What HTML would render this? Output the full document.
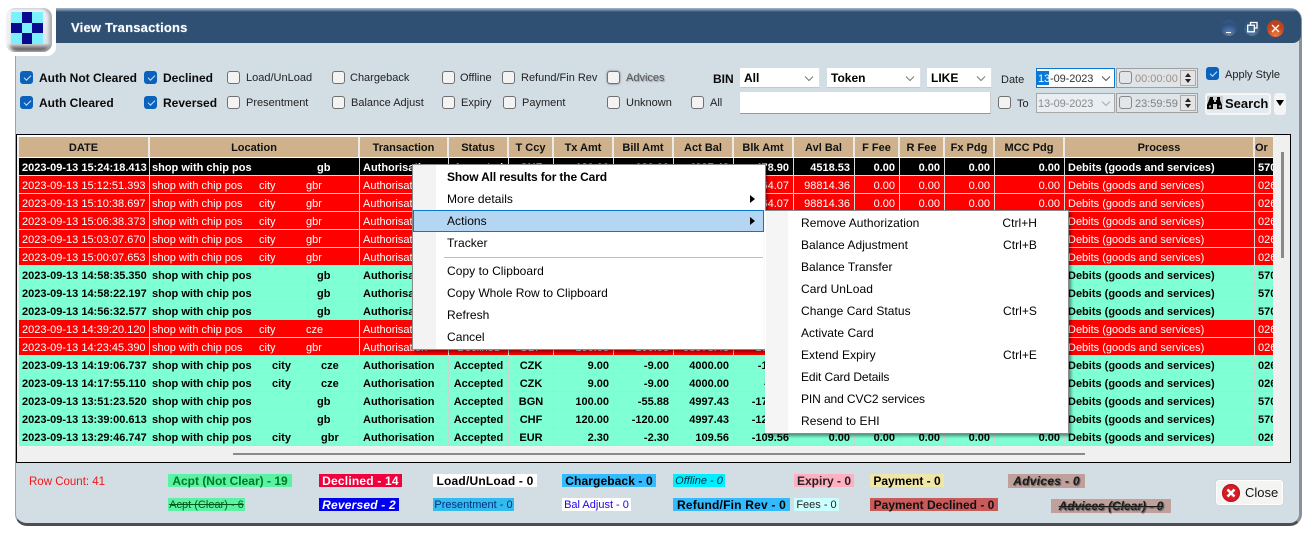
<!DOCTYPE html>
<html><head><meta charset="utf-8"><title>View Transactions</title>
<style>
html,body{margin:0;padding:0;background:#fff;width:1305px;height:536px;overflow:hidden}
body{position:relative;font:11px "Liberation Sans",sans-serif;color:#222}
div,span,td{box-sizing:border-box}
.a{position:absolute}
.t{position:absolute;white-space:nowrap;line-height:14px}
.b{font-weight:bold;font-size:12px;color:#0a0a0a}
.cb{position:absolute;width:13px;height:13px;border-radius:3px;border:1px solid #707070;background:#f3f3f3}
.cb.on{background:#0a62bc;border-color:#0a62bc}
.cb.on::after{content:"";position:absolute;left:3px;top:2.5px;width:6px;height:3px;border-left:1px solid #cfe2f7;border-bottom:1px solid #cfe2f7;transform:rotate(-45deg)}
.sel{position:absolute;background:#fff;border-bottom:1px solid #c4c8cc;border-right:1px solid #dde;font:bold 12px/21px "Liberation Sans",sans-serif;color:#000;padding-left:4px}
.chev{position:absolute;right:4px;top:7px;width:12px;height:7px}
.tm{position:absolute;left:1116px;width:82px;background:#dfe4e8;border:1px solid #a0a0a0}
.spin{position:absolute;left:63px;top:1px;width:16px;bottom:1px;background:#e4e4e4;border:1px solid #aaa}
.spin::before{content:"";position:absolute;left:4px;top:2px;border:3.5px solid transparent;border-top:0;border-bottom:4px solid #222}
.spin::after{content:"";position:absolute;left:4px;bottom:2px;border:3.5px solid transparent;border-bottom:0;border-top:4px solid #222}
.tbl{position:absolute;left:19px;width:1254px;border-collapse:separate;border-spacing:0;table-layout:fixed}
.tbl td{height:18px;padding:3px 3px 0;white-space:nowrap;overflow:hidden;font-size:11px;line-height:14px;border-right:1px solid #d8d8d8;border-bottom:1px solid #d8d8d8;position:relative}
.tbl td:nth-child(4),.tbl td:nth-child(5){text-align:center;padding:3px 0 0}
.tbl td:nth-child(n+6):nth-child(-n+14){text-align:right;padding-right:4px}
.tbl td:nth-child(2){padding-left:2px}
.tbl td:nth-child(16){padding-right:0;border-right:0}
.k td{background:#000;color:#fff;font-weight:bold}
.r td{background:#f00;color:#fff}
.g td{background:#7fffd4;color:#000;font-weight:bold;border-color:#c9d6d0}
.h td{background:#cfb28c;color:#111;font-weight:bold;text-align:center!important;height:20px;padding:2px 0 0!important;border-right:2px solid #e9e9e9;border-bottom:0;line-height:18px}
.p{position:absolute;top:3px}
.menu{position:absolute;background:#fff;border:1px solid #8a8a8a;box-shadow:2px 2px 3px rgba(0,0,0,.45)}
.m{position:absolute;white-space:nowrap;font-size:12px;line-height:16px;color:#000;letter-spacing:.05px}
.lb{position:absolute;height:13px;line-height:14px;text-align:center;white-space:nowrap;font-size:11px}
.lb.bd{font-weight:bold;font-size:12px;color:#000}
.arr{position:absolute;border:4px solid transparent;border-right:0;border-left:5px solid #000}
</style></head><body>

<!-- window -->
<div class="a" style="left:15px;top:8px;width:1287px;height:518px;background:#d3dde4;border-radius:12px;border-left:1px solid #8ea3bd;border-right:3px solid #8b9196;border-bottom:3px solid #4c4f52"></div>
<div class="a" style="left:15px;top:8px;width:1286px;height:35px;background:linear-gradient(#aab9cf 0,#6f88a8 2px,#2f5073 4px,#2f5073 100%);border-radius:12px 12px 8px 0"></div>
<div class="a" style="left:0;top:0;width:56px;height:56px;background:#fff;border-bottom-right-radius:9px"></div>
<div class="a" style="left:0;top:0;width:100%;height:8px;background:#fff"></div>

<!-- logo -->
<div class="a" style="left:6px;top:8px;width:46px;height:44px;border-radius:9px;background:linear-gradient(#eef1f4 0,#dfe4e8 80%,#6e6e6e 92%,#555 100%);box-shadow:inset -3px 0 3px #a8acb0,inset 3px 0 3px #f4f4f4"></div>
<div class="a" style="left:11px;top:12px;width:32px;height:32px;background:#7cf0ff"></div>
<div class="a" style="left:22px;top:12px;width:10px;height:11px;background:#0a0a90"></div>
<div class="a" style="left:11px;top:23px;width:11px;height:10px;background:#0a0a90"></div>
<div class="a" style="left:32px;top:23px;width:11px;height:10px;background:#0a0a90"></div>
<div class="a" style="left:22px;top:33px;width:10px;height:11px;background:#0a0a90"></div>

<div class="t" style="left:71px;top:21px;color:#fff;font-weight:bold;font-size:13px;letter-spacing:.2px;text-shadow:0 0 1px #9fb4cc">View Transactions</div>

<!-- window buttons -->
<div class="a" style="left:1221px;top:20px;width:16px;height:16px;border-radius:50%;background:radial-gradient(circle at 50% 85%,#5f86b5,#2d5080 60%,#3f5f88)"></div>
<div class="a" style="left:1226px;top:32px;width:5px;height:1px;background:#fff"></div>
<div class="a" style="left:1244px;top:20px;width:16px;height:16px;border-radius:50%;background:radial-gradient(circle at 50% 85%,#54799f,#33557c 70%)"></div>
<svg class="a" style="left:1246px;top:21px" width="13" height="13" viewBox="0 0 13 13"><path d="M4.5 3.5V1.5H11V7H8.5" fill="none" stroke="#fff" stroke-width="1.3"/><rect x="1.7" y="4.2" width="6.6" height="6.6" fill="none" stroke="#fff" stroke-width="1.3"/></svg>
<div class="a" style="left:1267px;top:20px;width:17px;height:17px;border-radius:50%;background:radial-gradient(circle at 50% 90%,#f07a3c,#c0441c 55%,#a8482c)"></div>
<svg class="a" style="left:1270px;top:23px" width="11" height="11" viewBox="0 0 11 11"><path d="M2 2L9 9M9 2L2 9" stroke="#fff" stroke-width="1.3"/></svg>

<!-- filters -->
<div class="cb on" style="left:20px;top:71px"></div><div class="t b" style="left:39px;top:71px">Auth Not Cleared</div>
<div class="cb on" style="left:144px;top:71px"></div><div class="t b" style="left:163px;top:71px">Declined</div>
<div class="cb" style="left:227px;top:71px"></div><div class="t" style="left:246px;top:71px">Load/UnLoad</div>
<div class="cb" style="left:332px;top:71px"></div><div class="t" style="left:350px;top:71px">Chargeback</div>
<div class="cb" style="left:442px;top:71px"></div><div class="t" style="left:460px;top:71px">Offline</div>
<div class="cb" style="left:502px;top:71px"></div><div class="t" style="left:521px;top:71px">Refund/Fin Rev</div>
<div class="cb" style="left:607px;top:71px;box-shadow:0 0 2px #777"></div><div class="t" style="left:626px;top:71px;color:#555;text-shadow:1px 1px 1px #999">Advices</div>

<div class="cb on" style="left:20px;top:96px"></div><div class="t b" style="left:39px;top:96px">Auth Cleared</div>
<div class="cb on" style="left:144px;top:96px"></div><div class="t b" style="left:163px;top:96px">Reversed</div>
<div class="cb" style="left:227px;top:96px"></div><div class="t" style="left:246px;top:96px">Presentment</div>
<div class="cb" style="left:332px;top:96px"></div><div class="t" style="left:351px;top:96px">Balance Adjust</div>
<div class="cb" style="left:442px;top:96px"></div><div class="t" style="left:461px;top:96px">Expiry</div>
<div class="cb" style="left:503px;top:96px"></div><div class="t" style="left:522px;top:96px">Payment</div>
<div class="cb" style="left:607px;top:96px"></div><div class="t" style="left:626px;top:96px">Unknown</div>
<div class="cb" style="left:691px;top:96px"></div><div class="t" style="left:710px;top:96px">All</div>

<div class="t b" style="left:713px;top:72px">BIN</div>
<div class="sel" style="left:740px;top:68px;width:80px;height:20px">All<svg class="chev" viewBox="0 0 12 7"><path d="M2 1.5L6 5.5L10 1.5" fill="none" stroke="#777"/></svg></div>
<div class="sel" style="left:827px;top:68px;width:94px;height:20px">Token<svg class="chev" viewBox="0 0 12 7"><path d="M2 1.5L6 5.5L10 1.5" fill="none" stroke="#777"/></svg></div>
<div class="sel" style="left:927px;top:68px;width:65px;height:20px">LIKE<svg class="chev" viewBox="0 0 12 7"><path d="M2 1.5L6 5.5L10 1.5" fill="none" stroke="#777"/></svg></div>
<div class="a" style="left:740px;top:92px;width:251px;height:22px;background:#fff;border-bottom:1px solid #999;border-right:1px solid #ccc"></div>

<div class="t" style="left:1001px;top:73px">Date</div>
<div class="cb" style="left:998px;top:96px"></div><div class="t" style="left:1017px;top:97px">To</div>

<div class="a" style="left:1036px;top:68px;width:79px;height:20px;background:#fff;border:1px solid #0a78d0"></div>
<div class="a" style="left:1037px;top:71px;width:12px;height:14px;background:#0a78d7"></div>
<div class="t" style="left:1038px;top:72px;color:#333;letter-spacing:-.1px"><span style="color:#fff">13</span>-09-2023</div>
<svg class="a" style="left:1100px;top:75px" width="12" height="7" viewBox="0 0 12 7"><path d="M2 1.5L6 5.5L10 1.5" fill="none" stroke="#555"/></svg>

<div class="a" style="left:1036px;top:93px;width:79px;height:20px;background:#e9eef2;border:1px solid #a8a8a8"></div>
<div class="t" style="left:1038px;top:97px;color:#8a8a8a;letter-spacing:-.1px">13-09-2023</div>
<svg class="a" style="left:1100px;top:100px" width="12" height="7" viewBox="0 0 12 7"><path d="M2 1.5L6 5.5L10 1.5" fill="none" stroke="#aaa"/></svg>

<div class="tm" style="top:68px;height:20px"><div class="spin"></div></div>
<div class="cb" style="left:1119px;top:71px;background:#e2e6e8;border-color:#888"></div>
<div class="t" style="left:1135px;top:72px;color:#a09080">00:00:00</div>
<div class="tm" style="top:93px;height:20px"><div class="spin"></div></div>
<div class="cb" style="left:1119px;top:96px;background:#e2e6e8;border-color:#888"></div>
<div class="t" style="left:1135px;top:97px;color:#808080">23:59:59</div>

<div class="cb on" style="left:1206px;top:67px"></div>
<div class="t" style="left:1225px;top:68px">Apply Style</div>

<div class="a" style="left:1205px;top:93px;width:66px;height:22px;background:#e4ebf0;border:2px solid #f6f6f6;border-radius:3px"></div>
<svg class="a" style="left:1207px;top:96px" width="16" height="14" viewBox="0 0 16 14"><rect x="0" y="0" width="16" height="14" fill="#d0d0d0"/><path d="M3 1h3v3h1v2h2V4h1V1h3v3l2 5v4H10V8H6v5H0V9l2-5z" fill="#000"/><circle cx="3" cy="10.5" r="1.2" fill="#999"/><circle cx="13" cy="10.5" r="1.2" fill="#999"/></svg>
<div class="t" style="left:1225px;top:97px;font-weight:bold;font-size:13px;color:#0a0a0a">Search</div>
<div class="a" style="left:1274px;top:93px;width:12px;height:22px;background:#f2f4f6;border-radius:3px"></div>
<div class="a" style="left:1276px;top:100px;border:4px solid transparent;border-bottom:0;border-top:6px solid #000"></div>

<!-- grid -->
<div class="a" style="left:16px;top:134px;width:1275px;height:329px;background:#f0f0f0;border:1px solid #000"></div>
<div class="a" style="left:17px;top:135px;width:1257px;height:2px;background:#fff"></div>
<div class="a" style="left:1281px;top:152px;width:3px;height:106px;background:#8a8a8a"></div>
<div class="a" style="left:233px;top:453px;width:852px;height:2px;background:#8a8a8a"></div>

<div class="a" style="left:19px;top:137px;width:1254px;height:309px;overflow:hidden">
<table class="tbl" style="left:0;top:0">
<colgroup><col style="width:131px"><col style="width:210px"><col style="width:89px"><col style="width:60px"><col style="width:45px"><col style="width:60px"><col style="width:60px"><col style="width:60px"><col style="width:60px"><col style="width:61px"><col style="width:45px"><col style="width:45px"><col style="width:50px"><col style="width:70px"><col style="width:190px"><col style="width:18px"></colgroup>
<tr class="h"><td>DATE</td><td>Location</td><td>Transaction</td><td>Status</td><td>T Ccy</td><td>Tx Amt</td><td>Bill Amt</td><td>Act Bal</td><td>Blk Amt</td><td>Avl Bal</td><td>F Fee</td><td>R Fee</td><td>Fx Pdg</td><td>MCC Pdg</td><td>Process</td><td style="border:0;text-align:left!important">Or</td></tr>
<tr style="height:1px"><td colspan="16" style="height:1px;padding:0;border:0;background:#fff;font-size:0;line-height:0"></td></tr>
<tr class="k"><td>2023-09-13 15:24:18.413</td><td>shop with chip pos<span class="p" style="left:167px">gb</span></td><td>Authorisation</td><td>Accepted</td><td>CHF</td><td>120.00</td><td>-120.00</td><td>4997.43</td><td>-478.90</td><td>4518.53</td><td>0.00</td><td>0.00</td><td>0.00</td><td>0.00</td><td>Debits (goods and services)</td><td>570</td></tr>
<tr class="r"><td>2023-09-13 15:12:51.393</td><td>shop with chip pos<span class="p" style="left:109px">city</span><span class="p" style="left:156px">gbr</span></td><td>Authorisation</td><td>Declined</td><td>GBP</td><td>100.00</td><td>-100.00</td><td>98978.43</td><td>-164.07</td><td>98814.36</td><td>0.00</td><td>0.00</td><td>0.00</td><td>0.00</td><td>Debits (goods and services)</td><td>026</td></tr>
<tr class="r"><td>2023-09-13 15:10:38.697</td><td>shop with chip pos<span class="p" style="left:109px">city</span><span class="p" style="left:156px">gbr</span></td><td>Authorisation</td><td>Declined</td><td>GBP</td><td>100.00</td><td>-100.00</td><td>98978.43</td><td>-164.07</td><td>98814.36</td><td>0.00</td><td>0.00</td><td>0.00</td><td>0.00</td><td>Debits (goods and services)</td><td>026</td></tr>
<tr class="r"><td>2023-09-13 15:06:38.373</td><td>shop with chip pos<span class="p" style="left:109px">city</span><span class="p" style="left:156px">gbr</span></td><td>Authorisation</td><td>Declined</td><td>GBP</td><td>100.00</td><td>-100.00</td><td>98978.43</td><td>-164.07</td><td>98814.36</td><td>0.00</td><td>0.00</td><td>0.00</td><td>0.00</td><td>Debits (goods and services)</td><td>026</td></tr>
<tr class="r"><td>2023-09-13 15:03:07.670</td><td>shop with chip pos<span class="p" style="left:109px">city</span><span class="p" style="left:156px">gbr</span></td><td>Authorisation</td><td>Declined</td><td>GBP</td><td>100.00</td><td>-100.00</td><td>98978.43</td><td>-164.07</td><td>98814.36</td><td>0.00</td><td>0.00</td><td>0.00</td><td>0.00</td><td>Debits (goods and services)</td><td>026</td></tr>
<tr class="r"><td>2023-09-13 15:00:07.653</td><td>shop with chip pos<span class="p" style="left:109px">city</span><span class="p" style="left:156px">gbr</span></td><td>Authorisation</td><td>Declined</td><td>GBP</td><td>100.00</td><td>-100.00</td><td>98978.43</td><td>-164.07</td><td>98814.36</td><td>0.00</td><td>0.00</td><td>0.00</td><td>0.00</td><td>Debits (goods and services)</td><td>026</td></tr>
<tr class="g"><td>2023-09-13 14:58:35.350</td><td>shop with chip pos<span class="p" style="left:167px">gb</span></td><td>Authorisation</td><td>Accepted</td><td>CHF</td><td>120.00</td><td>-120.00</td><td>4997.43</td><td>-478.90</td><td>4518.53</td><td>0.00</td><td>0.00</td><td>0.00</td><td>0.00</td><td>Debits (goods and services)</td><td>570</td></tr>
<tr class="g"><td>2023-09-13 14:58:22.197</td><td>shop with chip pos<span class="p" style="left:167px">gb</span></td><td>Authorisation</td><td>Accepted</td><td>CHF</td><td>120.00</td><td>-120.00</td><td>4997.43</td><td>-478.90</td><td>4518.53</td><td>0.00</td><td>0.00</td><td>0.00</td><td>0.00</td><td>Debits (goods and services)</td><td>570</td></tr>
<tr class="g"><td>2023-09-13 14:56:32.577</td><td>shop with chip pos<span class="p" style="left:167px">gb</span></td><td>Authorisation</td><td>Accepted</td><td>CHF</td><td>120.00</td><td>-120.00</td><td>4997.43</td><td>-478.90</td><td>4518.53</td><td>0.00</td><td>0.00</td><td>0.00</td><td>0.00</td><td>Debits (goods and services)</td><td>570</td></tr>
<tr class="r"><td>2023-09-13 14:39:20.120</td><td>shop with chip pos<span class="p" style="left:109px">city</span><span class="p" style="left:156px">cze</span></td><td>Authorisation</td><td>Declined</td><td>CZK</td><td>9.00</td><td>-9.00</td><td>98978.43</td><td>-164.07</td><td>98814.36</td><td>0.00</td><td>0.00</td><td>0.00</td><td>0.00</td><td>Debits (goods and services)</td><td>026</td></tr>
<tr class="r"><td>2023-09-13 14:23:45.390</td><td>shop with chip pos<span class="p" style="left:109px">city</span><span class="p" style="left:156px">gbr</span></td><td>Authorisation</td><td>Declined</td><td>GBP</td><td>100.00</td><td>-100.00</td><td>98978.43</td><td>-164.07</td><td>98814.36</td><td>0.00</td><td>0.00</td><td>0.00</td><td>0.00</td><td>Debits (goods and services)</td><td>026</td></tr>
<tr class="g"><td>2023-09-13 14:19:06.737</td><td>shop with chip pos<span class="p" style="left:122px">city</span><span class="p" style="left:171px">cze</span></td><td>Authorisation</td><td>Accepted</td><td>CZK</td><td>9.00</td><td>-9.00</td><td>4000.00</td><td>-18.00</td><td>3982.00</td><td>0.00</td><td>0.00</td><td>0.00</td><td>0.00</td><td>Debits (goods and services)</td><td>026</td></tr>
<tr class="g"><td>2023-09-13 14:17:55.110</td><td>shop with chip pos<span class="p" style="left:122px">city</span><span class="p" style="left:171px">cze</span></td><td>Authorisation</td><td>Accepted</td><td>CZK</td><td>9.00</td><td>-9.00</td><td>4000.00</td><td>-9.00</td><td>3991.00</td><td>0.00</td><td>0.00</td><td>0.00</td><td>0.00</td><td>Debits (goods and services)</td><td>026</td></tr>
<tr class="g"><td>2023-09-13 13:51:23.520</td><td>shop with chip pos<span class="p" style="left:167px">gb</span></td><td>Authorisation</td><td>Accepted</td><td>BGN</td><td>100.00</td><td>-55.88</td><td>4997.43</td><td>-175.88</td><td>4821.55</td><td>0.00</td><td>0.00</td><td>0.00</td><td>0.00</td><td>Debits (goods and services)</td><td>570</td></tr>
<tr class="g"><td>2023-09-13 13:39:00.613</td><td>shop with chip pos<span class="p" style="left:167px">gb</span></td><td>Authorisation</td><td>Accepted</td><td>CHF</td><td>120.00</td><td>-120.00</td><td>4997.43</td><td>-120.00</td><td>4877.43</td><td>0.00</td><td>0.00</td><td>0.00</td><td>0.00</td><td>Debits (goods and services)</td><td>570</td></tr>
<tr class="g"><td>2023-09-13 13:29:46.747</td><td>shop with chip pos<span class="p" style="left:122px">city</span><span class="p" style="left:171px">gbr</span></td><td>Authorisation</td><td>Accepted</td><td>EUR</td><td>2.30</td><td>-2.30</td><td>109.56</td><td>-109.56</td><td>0.00</td><td>0.00</td><td>0.00</td><td>0.00</td><td>0.00</td><td>Debits (goods and services)</td><td>026</td></tr>
</table>
</div>

<!-- context menu -->
<div class="menu" style="left:412px;top:164px;width:354px;height:186px"></div>
<div class="a" style="left:413px;top:165px;width:23px;height:184px;background:#f3f3f3"></div>
<div class="a" style="left:413px;top:210px;width:351px;height:22px;background:#b5d6f2;border:1px solid #0a78d0"></div>
<div class="a" style="left:444px;top:257px;width:319px;height:1px;background:#bdbdbd"></div>
<div class="m" style="left:447px;top:169px;font-weight:bold;letter-spacing:-.15px">Show All results for the Card</div>
<div class="m" style="left:447px;top:191px">More details</div>
<div class="m" style="left:447px;top:213px">Actions</div>
<div class="m" style="left:447px;top:235px">Tracker</div>
<div class="m" style="left:447px;top:263px">Copy to Clipboard</div>
<div class="m" style="left:447px;top:285px;letter-spacing:0">Copy Whole Row to Clipboard</div>
<div class="m" style="left:447px;top:307px">Refresh</div>
<div class="m" style="left:447px;top:329px">Cancel</div>
<div class="arr" style="left:750px;top:195px"></div>
<div class="arr" style="left:750px;top:217px"></div>

<!-- submenu -->
<div class="menu" style="left:765px;top:210px;width:304px;height:224px;border-left:0"></div>
<div class="a" style="left:766px;top:211px;width:22px;height:222px;background:#f5f5f5"></div>
<div class="m" style="left:801px;top:215px">Remove Authorization</div>
<div class="m" style="left:801px;top:237px">Balance Adjustment</div>
<div class="m" style="left:801px;top:259px">Balance Transfer</div>
<div class="m" style="left:801px;top:281px">Card UnLoad</div>
<div class="m" style="left:801px;top:303px">Change Card Status</div>
<div class="m" style="left:801px;top:325px">Activate Card</div>
<div class="m" style="left:801px;top:347px">Extend Expiry</div>
<div class="m" style="left:801px;top:369px;letter-spacing:-.1px">Edit Card Details</div>
<div class="m" style="left:801px;top:391px;letter-spacing:-.1px">PIN and CVC2 services</div>
<div class="m" style="left:801px;top:413px">Resend to EHI</div>
<div class="m" style="right:268px;top:215px">Ctrl+H</div>
<div class="m" style="right:268px;top:237px">Ctrl+B</div>
<div class="m" style="right:268px;top:303px">Ctrl+S</div>
<div class="m" style="right:268px;top:347px">Ctrl+E</div>

<!-- footer labels -->
<div class="t" style="left:29px;top:475px;color:#f01818;font-size:11.5px">Row Count: 41</div>
<div class="lb bd" style="left:168px;top:474px;width:124px;background:#5cf2a6;color:#007a1e;font-size:12px">Acpt (Not Clear) - 19</div>
<div class="lb" style="left:168px;top:498px;width:77px;background:#5cf2a6;color:#005a14;text-decoration:line-through">Acpt (Clear) - 6</div>
<div class="lb bd" style="left:319px;top:474px;width:83px;background:#f0003c;color:#fff;letter-spacing:.2px">Declined - 14</div>
<div class="lb bd" style="left:319px;top:498px;width:80px;background:#0000f0;color:#fff;font-style:italic;letter-spacing:.2px">Reversed - 2</div>
<div class="lb bd" style="left:433px;top:474px;width:104px;background:#fff;letter-spacing:.2px">Load/UnLoad - 0</div>
<div class="lb" style="left:433px;top:498px;width:81px;background:#33bbee;color:#003080">Presentment - 0</div>
<div class="lb bd" style="left:562px;top:474px;width:94px;background:#33bbff;letter-spacing:.1px">Chargeback - 0</div>
<div class="lb" style="left:562px;top:498px;width:69px;background:#fff;color:#2000f0">Bal Adjust - 0</div>
<div class="lb" style="left:673px;top:474px;width:52px;background:#00eeff;color:#003040;font-style:italic">Offline - 0</div>
<div class="lb bd" style="left:673px;top:498px;width:117px;background:#33bbff;letter-spacing:.2px">Refund/Fin Rev - 0</div>
<div class="lb bd" style="left:794px;top:474px;width:60px;background:#ffb0c0;color:#222">Expiry - 0</div>
<div class="lb" style="left:794px;top:498px;width:45px;background:#ccffff;color:#222">Fees - 0</div>
<div class="lb bd" style="left:870px;top:474px;width:74px;background:#f0e6a8">Payment - 0</div>
<div class="lb bd" style="left:870px;top:498px;width:128px;background:#c85a5a;color:#111">Payment Declined - 0</div>
<div class="lb bd" style="left:1008px;top:474px;width:77px;height:14px;background:#c0a09a;color:#1a1a1a;font-style:italic;letter-spacing:.3px;text-shadow:1px 1px 1px #555">Advices - 0</div>
<div class="lb bd" style="left:1051px;top:499px;width:120px;height:14px;background:#c0a09a;color:#1a1a1a;font-style:italic;font-size:12px;text-decoration:line-through;text-shadow:1px 1px 1px #555">Advices (Clear) - 0</div>

<!-- close -->
<div class="a" style="left:1216px;top:480px;width:67px;height:25px;background:#f4f5f3;border:1px solid #fff;border-radius:3px;box-shadow:0 0 1px #bbb"></div>
<div class="a" style="left:1222px;top:484px;width:18px;height:18px;border-radius:50%;background:#d81c28;box-shadow:inset 0 0 2px #800"></div>
<svg class="a" style="left:1222px;top:484px" width="18" height="18" viewBox="0 0 18 18"><path d="M5.5 5.5L12.5 12.5M12.5 5.5L5.5 12.5" stroke="#fff" stroke-width="2.6"/></svg>
<div class="t" style="left:1245px;top:486px;font-size:13px;color:#111">Close</div>
</body></html>
